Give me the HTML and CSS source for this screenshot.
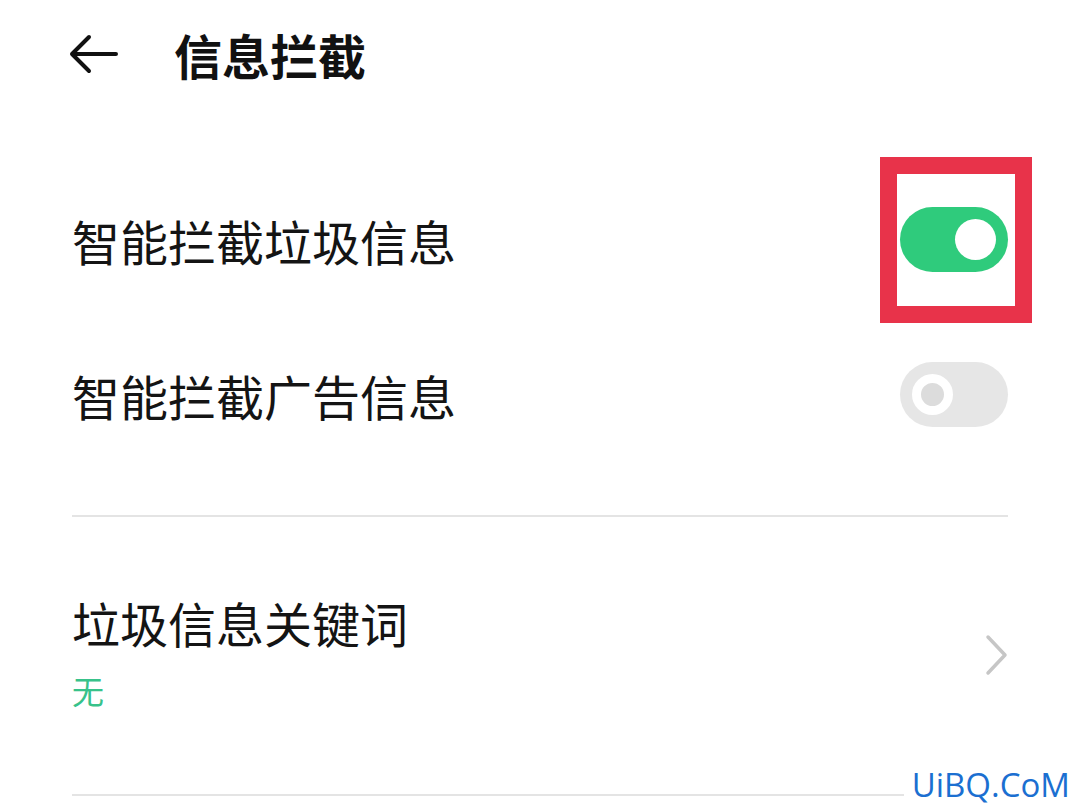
FILE: index.html
```html
<!DOCTYPE html>
<html lang="zh-CN">
<head>
    <meta charset="UTF-8">
    <meta name="viewport" content="width=device-width, initial-scale=1.0">
    <title>信息拦截</title>
    <link rel="stylesheet" href="styles.css">
</head>
<body>

<header class="topbar">
    <svg class="back" width="52" height="40" viewBox="0 0 52 40">
        <path d="M48 20 H4 M21 3 L4 20 L21 37" fill="none" stroke="#111" stroke-width="4" stroke-linecap="round" stroke-linejoin="round"/>
    </svg>
    <h1>信息拦截</h1>
</header>

<main class="list">
    <div class="row">
        <span class="label">智能拦截垃圾信息</span>
        <span class="mark">
            <span class="switch on"><span class="knob"></span></span>
        </span>
    </div>
    <div class="row">
        <span class="label">智能拦截广告信息</span>
        <span class="switch off"><span class="knob"></span></span>
    </div>

    <hr class="divider">

    <div class="row entry">
        <div class="entry-text">
            <span class="label">垃圾信息关键词</span>
            <span class="sub">无</span>
        </div>
        <svg class="chevron" width="26" height="44" viewBox="0 0 26 44">
            <path d="M4 4 L21 22 L4 40" fill="none" stroke="#c6c6c6" stroke-width="3.5" stroke-linecap="round" stroke-linejoin="round"/>
        </svg>
    </div>

    <hr class="divider last">
</main>

<div class="watermark">UiBQ.CoM</div>

</body>
</html>
```

FILE: styles.css
```css
body {
    margin: 0;
    background: #fff;
    color: #111;
    font-family: "Noto Sans CJK SC", "Noto Sans", sans-serif;
    padding: 0 72px;
    height: 810px;
    overflow: hidden;
    position: relative;
}
.topbar {
    height: 108px;
    display: flex;
    align-items: center;
}
.back {
    margin-left: -4px;
    margin-right: 54px;
}
.topbar h1 {
    margin: 0;
    font-size: 48px;
    font-weight: 700;
}
.list {
    padding-top: 54px;
}
.row {
    height: 155px;
    display: flex;
    align-items: center;
    justify-content: space-between;
}
.label {
    font-size: 48px;
    line-height: 1;
    color: #141414;
}
.mark {
    position: relative;
    display: flex;
}
.mark::after {
    content: "";
    position: absolute;
    left: -20px;
    right: -24px;
    top: -50px;
    bottom: -51px;
    border: 17px solid #e8334a;
}
.switch {
    width: 108px;
    height: 65px;
    border-radius: 33px;
    position: relative;
    display: block;
}
.switch.on {
    background: #2fcb7c;
}
.switch.off {
    background: #e6e6e6;
}
.knob {
    position: absolute;
    top: 12px;
    width: 41px;
    height: 41px;
    border-radius: 50%;
    box-sizing: border-box;
}
.switch.on .knob {
    right: 12px;
    background: #fff;
}
.switch.off .knob {
    left: 12px;
    border: 9px solid #fff;
    background: #dcdcdc;
}
.divider {
    margin: 43px 0 0;
    border: none;
    height: 2px;
    background: #e4e4e4;
}
.entry {
    height: 277px;
    align-items: flex-start;
    padding-top: 81px;
    box-sizing: border-box;
}
.entry-text {
    display: flex;
    flex-direction: column;
    gap: 28px;
}
.sub {
    font-size: 32px;
    line-height: 1;
    color: #38c28a;
}
.chevron {
    margin-top: 35px;
    margin-right: -2px;
}
.divider.last {
    margin-top: 0;
}
.watermark {
    position: absolute;
    right: 8px;
    bottom: 6px;
    padding: 0 2px 0 8px;
    background: #fff;
    color: #1b6fd1;
    font-family: "Open Sans", "Liberation Sans", sans-serif;
    font-size: 33px;
    line-height: 38px;
}
```
